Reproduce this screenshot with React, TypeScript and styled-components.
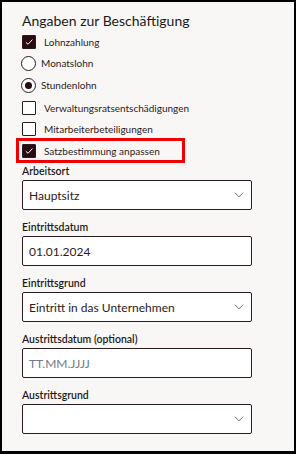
import React from "react";
import styled, { createGlobalStyle } from "styled-components";

const Global = createGlobalStyle`
  html, body { margin: 0; padding: 0; background: #ffffff; }
  body { font-family: Lato, "Noto Sans", sans-serif; }
  * { box-sizing: border-box; }
`;

const ink = "#2b1a1f";

const Frame = styled.div`
  width: 296px;
  height: 454px;
  border: 2px solid #000;
  border-bottom-width: 3px;
  background: #f8f7f5;
  padding: 9px 20px 0 20px;
  display: flex;
  flex-direction: column;
`;

const Title = styled.h2`
  margin: 0;
  font-size: 14px;
  line-height: 20px;
  font-weight: 400;
  color: #1b1a19;
`;

const OptionList = styled.div<{ $top: number }>`
  display: flex;
  flex-direction: column;
  margin-top: ${(p) => p.$top}px;
`;

const OptionRow = styled.label<{ $h?: number }>`
  display: flex;
  align-items: center;
  gap: 8px;
  height: ${(p) => p.$h ?? 22}px;
  font-size: 10px;
  color: #2b1a24;
`;

const Highlight = styled.div`
  align-self: flex-start;
  margin-left: -6px;
  border: 3px solid #ee0000;
  padding: 0 0 0 3px;
  width: 169px;
  height: 25px;
  display: flex;
  align-items: center;
`;

const Box = styled.span<{ $checked?: boolean }>`
  width: 14px;
  height: 14px;
  border-radius: 1px;
  border: 1px solid ${ink};
  background: ${(p) => (p.$checked ? "#2a0c10" : "#ffffff")};
  display: inline-flex;
  align-items: center;
  justify-content: center;
  flex: none;
`;

const Radio = styled.span<{ $checked?: boolean }>`
  width: 15px;
  height: 15px;
  border-radius: 50%;
  border: 1px solid ${ink};
  background: #fff;
  display: inline-flex;
  align-items: center;
  justify-content: center;
  flex: none;
  margin-left: -1px;
  margin-right: -3px;
  &::after {
    content: "";
    display: ${(p) => (p.$checked ? "block" : "none")};
    width: 7px;
    height: 7px;
    border-radius: 50%;
    background: #2a0c10;
  }
`;

const Fields = styled.div`
  display: flex;
  flex-direction: column;
  gap: 10px;
  margin-top: 1px;
  width: 230px;
`;

const Field = styled.div`
  display: flex;
  flex-direction: column;
  gap: 2px;
`;

const FieldLabel = styled.div`
  font-size: 10.5px;
  line-height: 14px;
  font-weight: 600;
  color: #1b1a19;
`;

const Control = styled.div<{ $placeholder?: boolean }>`
  height: 30px;
  border: 1px solid ${ink};
  border-radius: 2px;
  background: #ffffff;
  display: flex;
  align-items: center;
  justify-content: space-between;
  padding: 0 6px 0 6px;
  font-size: 12px;
  color: ${(p) => (p.$placeholder ? "#6e7b8b" : "#2b1a24")};
`;

const Check = () => (
  <svg width="10" height="10" viewBox="0 0 10 10">
    <path d="M1.8 5.2 L4 7.3 L8.4 2.6" fill="none" stroke="#fff" strokeWidth="1" />
  </svg>
);

const Chevron = () => (
  <svg width="10" height="6" viewBox="0 0 10 6" style={{ marginRight: 1 }}>
    <path d="M0.8 0.8 L5 4.8 L9.2 0.8" fill="none" stroke="#6a6f85" strokeWidth="1" />
  </svg>
);

const Select = ({ value }: { value: string }) => (
  <Control>
    <span>{value}</span>
    <Chevron />
  </Control>
);

export default function App() {
  return (
    <>
      <Global />
      <Frame>
        <Title>Angaben zur Beschäftigung</Title>
        <OptionList $top={0}>
          <OptionRow $h={21}>
            <Box $checked>
              <Check />
            </Box>
            Lohnzahlung
          </OptionRow>
          <OptionRow $h={22}>
            <Radio />
            Monatslohn
          </OptionRow>
          <OptionRow $h={22}>
            <Radio $checked />
            Stundenlohn
          </OptionRow>
        </OptionList>
        <OptionList $top={0}>
          <OptionRow $h={23}>
            <Box />
            Verwaltungsratsentschädigungen
          </OptionRow>
          <OptionRow $h={19}>
            <Box />
            Mitarbeiterbeteiligungen
          </OptionRow>
          <Highlight>
            <OptionRow $h={19}>
              <Box $checked>
                <Check />
              </Box>
              Satzbestimmung anpassen
            </OptionRow>
          </Highlight>
        </OptionList>
        <Fields>
          <Field>
            <FieldLabel>Arbeitsort</FieldLabel>
            <Select value="Hauptsitz" />
          </Field>
          <Field>
            <FieldLabel>Eintrittsdatum</FieldLabel>
            <Control>01.01.2024</Control>
          </Field>
          <Field>
            <FieldLabel>Eintrittsgrund</FieldLabel>
            <Select value="Eintritt in das Unternehmen" />
          </Field>
          <Field>
            <FieldLabel>Austrittsdatum (optional)</FieldLabel>
            <Control $placeholder>TT.MM.JJJJ</Control>
          </Field>
          <Field>
            <FieldLabel>Austrittsgrund</FieldLabel>
            <Select value="" />
          </Field>
        </Fields>
      </Frame>
    </>
  );
}
